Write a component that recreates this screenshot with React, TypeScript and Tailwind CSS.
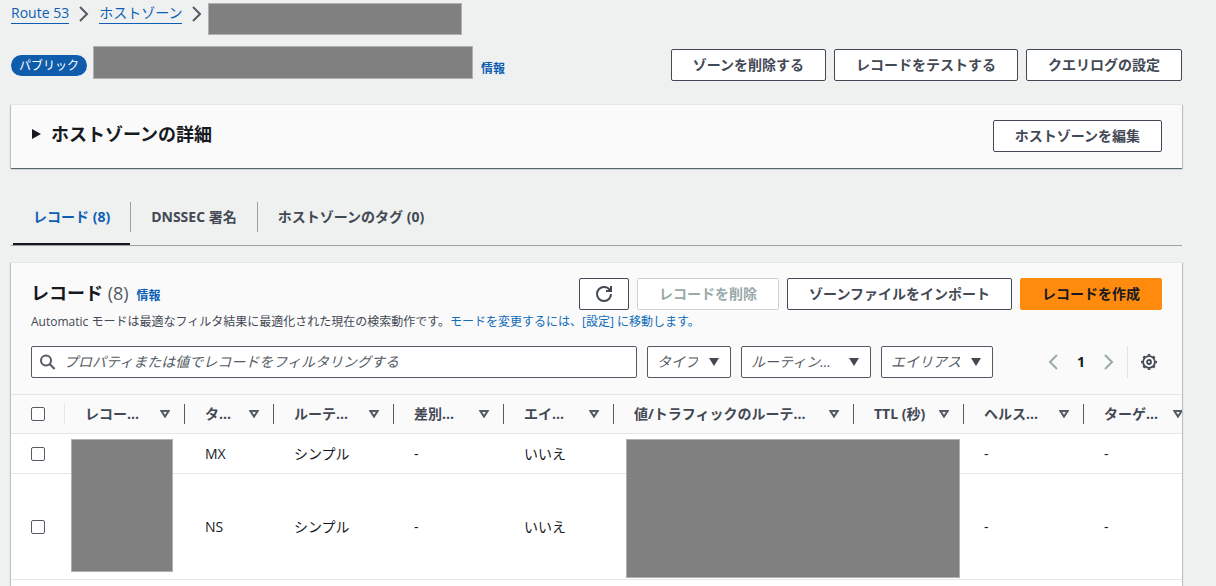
import React from 'react';

const columns = [
  { label: 'レコー...', width: 'w-[120px]' },
  { label: 'タ...', width: 'w-[89px]' },
  { label: 'ルーテ...', width: 'w-[120px]' },
  { label: '差別...', width: 'w-[110px]' },
  { label: 'エイ...', width: 'w-[110px]' },
  { label: '値/トラフィックのルーテ...', width: 'w-[240px]' },
  { label: 'TTL (秒)', width: 'w-[110px]' },
  { label: 'ヘルス...', width: 'w-[120px]' },
  { label: 'ターゲ...', width: 'w-[114px]' },
];

const records = [
  { type: 'MX', height: 'h-10' },
  { type: 'NS', height: 'h-[106px]' },
];

const filters = [
  { id: 'type', name: 'タイプ', width: 'w-[84px]' },
  { id: 'routing', name: 'ルーティン...', width: 'w-[130px]' },
  { id: 'alias', name: 'エイリアス', width: 'w-[112px]' },
];

interface ButtonProps {
  children: React.ReactNode;
  variant?: 'normal' | 'primary' | 'disabled';
  label?: string;
}

const Button: React.FC<ButtonProps> = ({ children, variant = 'normal', label }) => {
  const styles = {
    normal: 'border-[#434954] bg-white text-[#434954]',
    primary: 'border-[#fe8a0e] bg-[#fe8a0e] text-[#16191f]',
    disabled: 'border-[#cbd3d3] bg-white text-[#9aa9aa]',
  };
  return (
    <button
      type="button"
      aria-label={label}
      disabled={variant === 'disabled'}
      className={`flex h-8 items-center whitespace-nowrap rounded-xs border px-[21px] text-sm font-bold ${styles[variant]}`}
    >
      {children}
    </button>
  );
};

const Chevron: React.FC<{ className?: string; left?: boolean }> = ({ className = '', left }) => (
  <svg viewBox="0 0 16 16" className={`size-4 ${className}`} fill="none" stroke="currentColor" strokeWidth="2">
    <path d={left ? 'M12 1 5 8l7 7' : 'm4 1 7 7-7 7'} />
  </svg>
);

const Checkbox: React.FC<{ label: string }> = ({ label }) => (
  <input
    type="checkbox"
    aria-label={label}
    className="block size-3.5 appearance-none rounded-xs border border-[#545b64] bg-white checked:bg-[#0e5fb4]"
  />
);

const Redacted: React.FC<{ className: string }> = ({ className }) => (
  <div className={`border border-[#b0b0b0] bg-[#808080] ${className}`} />
);

const card =
  'border-t border-[#e3e7e7] bg-[#fafafa] shadow-[0_1px_1px_0_rgba(0,28,36,0.5),1px_1px_1px_0_rgba(0,28,36,0.15),-1px_1px_1px_0_rgba(0,28,36,0.15)]';

export default function App() {
  return (
    <main className="flex h-screen flex-col overflow-hidden bg-[#eff1f0] pt-[3px] pr-[34px] pl-[11px] font-['Open_Sans','Noto_Sans_CJK_JP',sans-serif] text-sm text-[#16191f]">
      <nav aria-label="breadcrumb" className="flex shrink-0 items-start text-[#0e5fb4]">
        <a href="#" className="border-b border-[#0e5fb4] leading-5">Route 53</a>
        <Chevron className="mx-[7px] mt-[3px] text-[#545b64]" />
        <a href="#" className="border-b border-[#0e5fb4] leading-5">ホストゾーン</a>
        <Chevron className="ml-[7px] mt-[3px] text-[#545b64]" />
        <Redacted className="ml-[3px] h-8 w-[254px]" />
      </nav>

      <header className="mt-[11px] flex shrink-0 items-start justify-between">
        <div className="flex items-end">
          <span className="mb-[3px] rounded-full bg-[#0f5cad] px-2 text-xs leading-[21px] text-white">パブリック</span>
          <Redacted className="ml-1.5 h-[33px] w-[380px]" />
          <a href="#" className="ml-2 text-xs leading-5 font-bold text-[#0e5fb4]">情報</a>
        </div>
        <div className="-mb-1 flex gap-2 pt-[3px]">
          <Button>ゾーンを削除する</Button>
          <Button>レコードをテストする</Button>
          <Button>クエリログの設定</Button>
        </div>
      </header>

      <section className={`mt-[25px] flex shrink-0 items-start justify-between px-5 pt-[15px] pb-4 ${card}`}>
        <button type="button" className="flex items-center gap-2.5 text-lg leading-7 font-bold">
          <svg viewBox="0 0 9 10" className="ml-px h-2.5 w-[9px]" fill="currentColor">
            <path d="M0 0v10l9-5z" />
          </svg>
          ホストゾーンの詳細
        </button>
        <Button>ホストゾーンを編集</Button>
      </section>

      <ul role="tablist" className="mt-[34px] flex shrink-0 items-start border-b border-[#95a5a6] pl-0.5 font-bold text-[#434954]">
        <li className="flex border-b-2 border-[#16191f] pb-[11px]">
          <button type="button" role="tab" aria-selected="true" className="h-[30px] px-5 text-[#0e5fb4]">レコード (8)</button>
        </li>
        <li className="flex border-x border-[#95a5a6]">
          <button type="button" role="tab" aria-selected="false" className="h-[30px] px-5">DNSSEC 署名</button>
        </li>
        <li className="flex">
          <button type="button" role="tab" aria-selected="false" className="h-[30px] px-5">ホストゾーンのタグ (0)</button>
        </li>
      </ul>

      <section className={`mt-4 flex min-h-0 flex-1 flex-col ${card}`}>
        <div className="px-5 pt-[15px] pb-4">
          <div className="flex items-start justify-between">
            <div className="flex items-baseline">
              <h2 className="text-lg leading-[30px] font-bold">
                レコード <span className="font-normal text-[#545b64]">(8)</span>
              </h2>
              <a href="#" className="ml-2 text-xs font-bold text-[#0e5fb4]">情報</a>
            </div>
            <div className="flex gap-2">
              <Button label="更新">
                <svg viewBox="0 0 16 16" className="-mx-[5px] size-4" fill="none" stroke="currentColor" strokeWidth="2">
                  <path d="M10 5h5V0" />
                  <path d="M15 8a6.96 6.96 0 0 1-7 7 6.96 6.96 0 0 1-7-7 6.96 6.96 0 0 1 7-7 6.87 6.87 0 0 1 6.3 4" />
                </svg>
              </Button>
              <Button variant="disabled">レコードを削除</Button>
              <Button>ゾーンファイルをインポート</Button>
              <Button variant="primary">レコードを作成</Button>
            </div>
          </div>
          <p className="mt-0.5 text-xs leading-5 text-[#434954]">
            Automatic モードは最適なフィルタ結果に最適化された現在の検索動作です。
            <a href="#" className="text-[#0e6bb8]">モードを変更するには、[設定] に移動します。</a>
          </p>

          <div className="mt-3.5 flex h-8 gap-2.5">
            <label className="flex min-w-0 flex-1 items-center gap-2 rounded-xs border border-[#545b64] bg-white px-2 text-[#545b64]">
              <svg viewBox="0 0 16 16" className="size-4 shrink-0" fill="none" stroke="currentColor" strokeWidth="2">
                <circle cx="6" cy="6.5" r="5" />
                <path d="m9.6 10 5 5" />
              </svg>
              <input
                type="text"
                aria-label="レコードをフィルタリング"
                placeholder="プロパティまたは値でレコードをフィルタリングする"
                className="min-w-0 flex-1 bg-transparent outline-none placeholder:text-[#545b64] placeholder:italic"
              />
            </label>
            {filters.map((filter) => (
              <div key={filter.id} className={`relative ${filter.width}`}>
                <select
                  aria-label={filter.name}
                  className="h-8 w-full appearance-none rounded-xs border border-[#545b64] bg-white pr-8 pl-[9px] text-[#545b64] italic"
                >
                  <option>{filter.name}</option>
                </select>
                <svg viewBox="0 0 10 8" className="pointer-events-none absolute top-3 right-3 h-2 w-2.5 text-[#434954]" fill="currentColor">
                  <path d="M0 0h10L5 8z" />
                </svg>
              </div>
            ))}
            <div className="ml-9 flex items-center">
              <button type="button" aria-label="前のページ" className="flex w-7 justify-center text-[#9aa9aa]">
                <Chevron left />
              </button>
              <button type="button" className="w-7 font-bold">1</button>
              <button type="button" aria-label="次のページ" className="flex w-7 justify-center text-[#9aa9aa]">
                <Chevron />
              </button>
              <span className="ml-1 h-8 w-px bg-[#dfe3e3]" />
              <button type="button" aria-label="設定" className="ml-2 flex w-[26px] justify-center text-[#434954]">
                <svg viewBox="0 0 16 16" className="size-4" fill="none" stroke="currentColor">
                  <circle cx="8" cy="8" r="5.9" strokeWidth="1.8" />
                  <circle cx="8" cy="8" r="7.2" strokeWidth="1.6" pathLength="80" strokeDasharray="4.4 5.6" strokeDashoffset="2.2" />
                  <circle cx="8" cy="8" r="2" strokeWidth="1.8" />
                </svg>
              </button>
            </div>
          </div>
        </div>

        <div className="min-h-0 flex-1 overflow-hidden border-t border-[#e3e7e7] bg-white">
          <table className="w-[1187px] table-fixed border-separate border-spacing-0 text-left">
            <thead className="bg-[#fafafa] text-[#434954]">
              <tr>
                <th className="h-[39px] w-[54px] border-b border-[#e3e7e7] p-0">
                  <div className="flex h-5 items-center border-r border-[#e3e7e7] pl-5">
                    <Checkbox label="すべて選択" />
                  </div>
                </th>
                {columns.map((column) => (
                  <th key={column.label} className={`border-b border-[#e3e7e7] p-0 ${column.width}`}>
                    <div className="flex h-5 items-center justify-between border-r border-[#545b64] pr-3.5 pl-5 whitespace-nowrap">
                      {column.label}
                      <svg viewBox="0 0 10 8" className="h-2 w-2.5 text-[#545b64]" fill="none" stroke="currentColor" strokeWidth="2">
                        <path d="M1.4 1h7.2L5 6.6z" />
                      </svg>
                    </div>
                  </th>
                ))}
              </tr>
            </thead>
            <tbody>
              {records.map((record, index) => (
                <tr key={record.type} className={`${record.height} *:border-b *:border-[#e3e7e7] *:p-0 *:pl-5`}>
                  <td><Checkbox label={`${record.type} を選択`} /></td>
                  <td className="relative">
                    {index === 0 && <Redacted className="absolute top-[5px] left-1.5 h-[133px] w-[102px]" />}
                  </td>
                  <td>{record.type}</td>
                  <td>シンプル</td>
                  <td>-</td>
                  <td>いいえ</td>
                  <td className="relative">
                    {index === 0 && <Redacted className="absolute top-[5px] left-3 h-[139px] w-[334px]" />}
                  </td>
                  <td></td>
                  <td>-</td>
                  <td>-</td>
                </tr>
              ))}
            </tbody>
          </table>
        </div>
      </section>
    </main>
  );
}
